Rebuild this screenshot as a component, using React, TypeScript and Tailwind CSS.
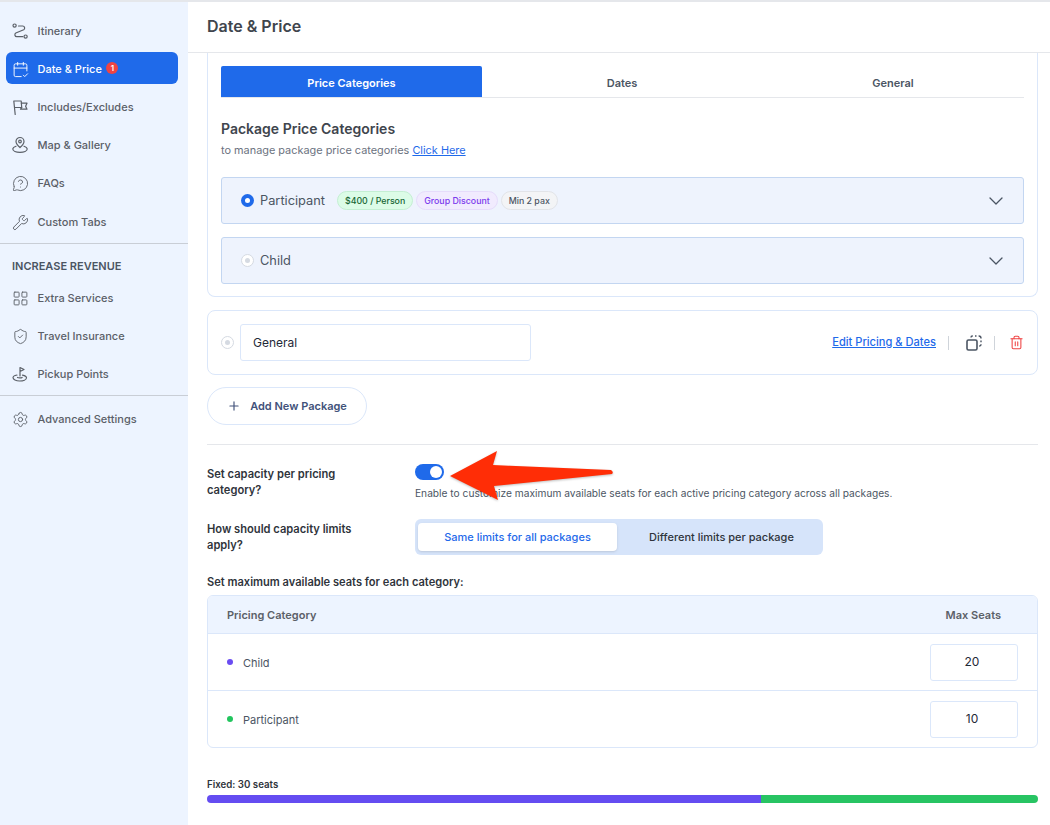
import React from "react";
import {
  CalendarCheck2,
  ChevronDown,
  LayoutGrid,
  MessageCircleQuestion,
  Plus,
  Settings,
  ShieldCheck,
  Trash2,
  Wrench,
} from "lucide-react";

const RouteIcon = () => (
  <svg width="18" height="18" viewBox="0 0 18 18" fill="none" stroke="currentColor" strokeWidth="1.2" strokeLinecap="round" strokeLinejoin="round">
    <circle cx="3.6" cy="3.6" r="1.6" />
    <circle cx="14.6" cy="14.6" r="1.6" />
    <path d="M7.5 4h4.2a2 2 0 0 1 1 3.7L4.8 11a2 2 0 0 0 1 3.7h6" />
  </svg>
);

const FlagsIcon = () => (
  <svg width="18" height="18" viewBox="0 0 18 18" fill="none" stroke="currentColor" strokeWidth="1.2" strokeLinecap="round" strokeLinejoin="round">
    <path d="M4.2 16.5 2.8 3h7.4l.5 6.5H3.6" />
    <path d="M10.4 5.2H16l-1.4 3 1.4 3H9.5l1.2-1.7" />
  </svg>
);

const MapIcon = () => (
  <svg width="18" height="18" viewBox="0 0 18 18" fill="none" stroke="currentColor" strokeWidth="1.2" strokeLinecap="round" strokeLinejoin="round">
    <path d="M9 11.5c-2.7-2.4-4-4-4-6a4 4 0 0 1 8 0c0 2-1.3 3.6-4 6z" />
    <circle cx="9" cy="5.5" r="1.3" />
    <path d="M5 10.2c-2 .7-3.2 1.7-3.2 2.9 0 1.8 3.2 3.2 7.2 3.2s7.2-1.4 7.2-3.2c0-1.2-1.2-2.2-3.2-2.9" />
  </svg>
);

const PickupIcon = () => (
  <svg width="18" height="18" viewBox="0 0 18 18" fill="none" stroke="currentColor" strokeWidth="1.2" strokeLinecap="round" strokeLinejoin="round">
    <path d="M9 11V2.5l4 2-4 2" />
    <path d="M6 10c-2.4.5-4 1.4-4 2.6C2 14.5 5 16 8.6 16s6.9-1.3 6.9-3.2c0-1.2-1.6-2.2-4-2.7" />
    <path d="M6.5 12.5c.7.5 4 .5 4.6 0" />
  </svg>
);

const DuplicateIcon = () => (
  <svg width="16" height="16" viewBox="0 0 16 16" fill="none" stroke="#4b5563" strokeWidth="1.4">
    <rect x="1" y="5" width="10" height="10" rx="1.5" strokeWidth="1.6" />
    <path d="M5 2.6V2.4A1.4 1.4 0 0 1 6.4 1h.4M9 1h1.5M12.6 1h.2A2.2 2.2 0 0 1 15 3.2v.3M15 5.6v1.6M15 9.2v.4A1.4 1.4 0 0 1 13.6 11h-.4" />
  </svg>
);

const Radio = ({ on }: { on?: boolean }) =>
  on ? (
    <span className="flex h-[13px] w-[13px] items-center justify-center rounded-full bg-[#1f6aea]">
      <span className="h-[5px] w-[5px] rounded-full bg-white" />
    </span>
  ) : (
    <span className="flex h-[13px] w-[13px] items-center justify-center rounded-full border border-[#d5dae2] bg-white">
      <span className="h-[5px] w-[5px] rounded-full bg-[#d5dae2]" />
    </span>
  );

const NavItem = ({ icon, label, badge, active }: { icon: React.ReactNode; label: string; badge?: boolean; active?: boolean }) => (
  <div
    className={`ml-[6px] mr-[10px] mb-[6px] flex h-8 items-center gap-[8.5px] rounded-[6px] pl-[5px] pt-[2px] text-[11px] font-medium ${
      active ? "bg-[#1f6aea] text-white" : "text-[#5b6068]"
    }`}
  >
    <span className="flex w-[18px] justify-center">{icon}</span>
    {label}
    {badge && (
      <span className="-ml-[4px] -mt-[2px] flex h-3 w-3 items-center justify-center rounded-full bg-[#ef4444] text-[8px] font-semibold text-white">
        1
      </span>
    )}
  </div>
);

const Pill = ({ className, children }: { className: string; children: React.ReactNode }) => (
  <span className={`rounded-full border px-[7px] py-[2px] text-[8.8px] font-medium leading-[13px] ${className}`}>{children}</span>
);

const Accordion = ({ children }: { children: React.ReactNode }) => (
  <div className="flex h-[47px] items-center rounded-[3px] border border-[#c3d6f1] bg-[#eef3fd] pl-[19px] pr-[15px]">
    {children}
    <ChevronDown size={24} strokeWidth={1.3} className="ml-auto text-[#4b5563]" />
  </div>
);

const SeatRow = ({ dot, label, value, rowClass }: { dot: string; label: string; value: number; rowClass: string }) => (
  <div className={`flex items-center pl-[19px] pr-[19px] ${rowClass}`}>
    <span className={`h-[6px] w-[6px] rounded-full ${dot}`} />
    <span className="ml-[10px] pt-[2px] text-[11px] text-[#4b5563]">{label}</span>
    <div className="ml-auto flex h-[37px] w-[88px] items-center justify-center rounded-[3px] border border-[#dbe7fa] pr-[4px] text-[12px] text-[#1f2937]">
      {value}
    </div>
  </div>
);

export default function App() {
  return (
    <div className="relative flex h-[825px] w-[1050px] overflow-hidden border-t-2 border-[#e5e7eb] bg-white font-['Inter',sans-serif]">
      {/* Sidebar */}
      <aside className="w-[188px] shrink-0 bg-[#edf4ff] pt-[12px]">
        <NavItem icon={<RouteIcon />} label="Itinerary" />
        <NavItem active badge icon={<CalendarCheck2 size={17} strokeWidth={1.3} />} label="Date & Price" />
        <NavItem icon={<FlagsIcon />} label="Includes/Excludes" />
        <NavItem icon={<MapIcon />} label="Map & Gallery" />
        <NavItem icon={<MessageCircleQuestion size={17} strokeWidth={1.3} />} label="FAQs" />
        <div className="pt-px">
          <NavItem icon={<Wrench size={17} strokeWidth={1.3} />} label="Custom Tabs" />
        </div>
        <div className="border-b border-[#c9ced6]" />
        <div className="mb-[8px] mt-[15px] pl-[12px] text-[11px] font-semibold leading-[14px] text-[#4b5563]">INCREASE REVENUE</div>
        <NavItem icon={<LayoutGrid size={17} strokeWidth={1.3} />} label="Extra Services" />
        <NavItem icon={<ShieldCheck size={17} strokeWidth={1.3} />} label="Travel Insurance" />
        <NavItem icon={<PickupIcon />} label="Pickup Points" />
        <div className="mt-px border-b border-[#c9ced6]" />
        <div className="mt-[6px]">
          <NavItem icon={<Settings size={17} strokeWidth={1.3} />} label="Advanced Settings" />
        </div>
      </aside>

      {/* Main */}
      <main className="min-w-0 flex-1">
        <header className="flex h-[51px] items-center border-b border-[#e5e7eb] pb-[2px] pl-[19px] text-[16px] font-semibold text-[#40454d]">
          Date &amp; Price
        </header>

        <div className="pl-[19px] pr-[12px]">
          <section className="rounded-b-[8px] border border-t-0 border-[#dbe7fa] px-[13px] pb-[12px] pt-[13px]">
            <div className="grid h-[32px] grid-cols-[261px_280px_1fr] border-b border-[#e5e7eb] text-[11px] font-semibold text-[#4b5563]">
              <div className="flex items-center justify-center rounded-t-[2px] bg-[#1f6aea] pt-[3px] text-white">Price Categories</div>
              <div className="flex items-center justify-center pt-[3px]">Dates</div>
              <div className="flex items-center justify-center pt-[3px]">General</div>
            </div>
            <h2 className="mt-[22px] text-[14px] font-semibold leading-[18px] text-[#40454d]">Package Price Categories</h2>
            <p className="mt-[5px] text-[10.9px] leading-[14px] text-[#6b7280]">
              to manage package price categories <span className="text-[#1f6aea] underline">Click Here</span>
            </p>
            <div className="mt-[20px] flex flex-col gap-[13px]">
              <Accordion>
                <Radio on />
                <span className="ml-[6px] text-[12.8px] text-[#4b5563]">Participant</span>
                <div className="ml-[12px] flex gap-[3px]">
                  <Pill className="border-[#c4efd3] bg-[#dcfce7] text-[#166534]">$400 / Person</Pill>
                  <Pill className="border-[#e6dcfb] bg-[#f1ebfe] text-[#7c3aed]">Group Discount</Pill>
                  <Pill className="border-[#e2e4e8] bg-[#f3f4f6] text-[#4b5563]">Min 2 pax</Pill>
                </div>
              </Accordion>
              <Accordion>
                <Radio />
                <span className="ml-[6px] text-[12.8px] text-[#4b5563]">Child</span>
              </Accordion>
            </div>
          </section>

          <section className="mt-[13px] flex h-[65px] items-center rounded-[8px] border border-[#dbe7fa] pl-[13px] pr-[13px]">
            <Radio />
            <div className="ml-[6px] flex h-[37px] w-[291px] items-center rounded-[3px] border border-[#dbe7fa] pl-[12px] text-[12px] text-[#1f2937]">
              General
            </div>
            <span className="ml-auto text-[11.1px] font-medium text-[#1f6aea] underline">Edit Pricing &amp; Dates</span>
            <span className="ml-[12px] h-[14px] w-px bg-[#cfd4da]" />
            <span className="ml-[17px]">
              <DuplicateIcon />
            </span>
            <span className="ml-[12px] h-[14px] w-px bg-[#cfd4da]" />
            <Trash2 size={15} strokeWidth={1.7} className="ml-[14px] text-[#ef4444]" />
          </section>

          <button className="mt-[12px] flex h-[38px] w-[160px] items-center justify-center gap-[9px] rounded-full border border-[#dbe7fa] text-[11px] font-semibold text-[#42527a]">
            <Plus size={14} strokeWidth={2} />
            Add New Package
          </button>

          <div className="mt-[19px] border-b border-[#e5e7eb]" />

          <div className="mt-[19px] flex">
            <div className="w-[208px] pt-[2px] text-[11.15px] font-semibold leading-[16px] text-[#2f343b]">
              Set capacity per pricing
              <br />
              category?
            </div>
            <div>
              <div className="flex h-4 w-[29px] items-center justify-end rounded-full bg-[#1f6aea] pr-[2px]">
                <span className="h-3 w-3 rounded-full bg-white" />
              </div>
              <p className="mt-[6px] text-[10.2px] leading-[14px] text-[#4b5563]">
                Enable to customize maximum available seats for each active pricing category across all packages.
              </p>
            </div>
          </div>

          <div className="mt-[19px] flex items-center">
            <div className="w-[208px] text-[11.15px] font-semibold leading-[16px] text-[#2f343b]">
              How should capacity limits
              <br />
              apply?
            </div>
            <div className="flex h-[36px] w-[408px] items-center rounded-[6px] bg-[#d6e4fa] p-[3px] text-[11px] font-medium">
              <div className="flex h-[28px] w-[199px] items-center justify-center rounded-[4px] bg-white text-[#1f6aea] shadow-sm">
                Same limits for all packages
              </div>
              <div className="flex flex-1 items-center justify-center pl-[6px] text-[#2f343b]">Different limits per package</div>
            </div>
          </div>

          <div className="mt-[20px] text-[11.1px] font-semibold leading-[14px] text-[#2f343b]">Set maximum available seats for each category:</div>

          <section className="mt-[6px] overflow-hidden rounded-[6px] border border-[#dbe7fa]">
            <div className="flex h-[38px] items-center justify-between border-b border-[#dbe7fa] bg-[#edf4ff] pl-[19px] pr-[36px] pt-[2px] text-[11px] font-semibold text-[#5b6068]">
              <span>Pricing Category</span>
              <span>Max Seats</span>
            </div>
            <SeatRow dot="bg-[#6a4cf2]" label="Child" value={20} rowClass="h-[57px] border-b border-[#dbe7fa]" />
            <SeatRow dot="bg-[#22c55e]" label="Participant" value={10} rowClass="h-[56px]" />
          </section>

          <div className="mt-[31px] text-[9.7px] font-semibold leading-[12px] text-[#2f343b]">Fixed: 30 seats</div>
          <div className="mt-[4px] flex h-2 overflow-hidden rounded-full">
            <div className="w-[554px] bg-[#644cf1]" />
            <div className="flex-1 bg-[#28c463]" />
          </div>
        </div>
      </main>

      {/* Red annotation arrow */}
      <svg className="absolute left-[445px] top-[445px] drop-shadow-[0_1px_1px_rgba(0,0,0,0.25)]" width="176" height="58" viewBox="0 0 176 58" fill="#ff2d06">
        <path d="M5 29 L52 4 L48 18 L166 23 Q169 25 167 27 L49 39 L53 53 Z" />
      </svg>
    </div>
  );
}
